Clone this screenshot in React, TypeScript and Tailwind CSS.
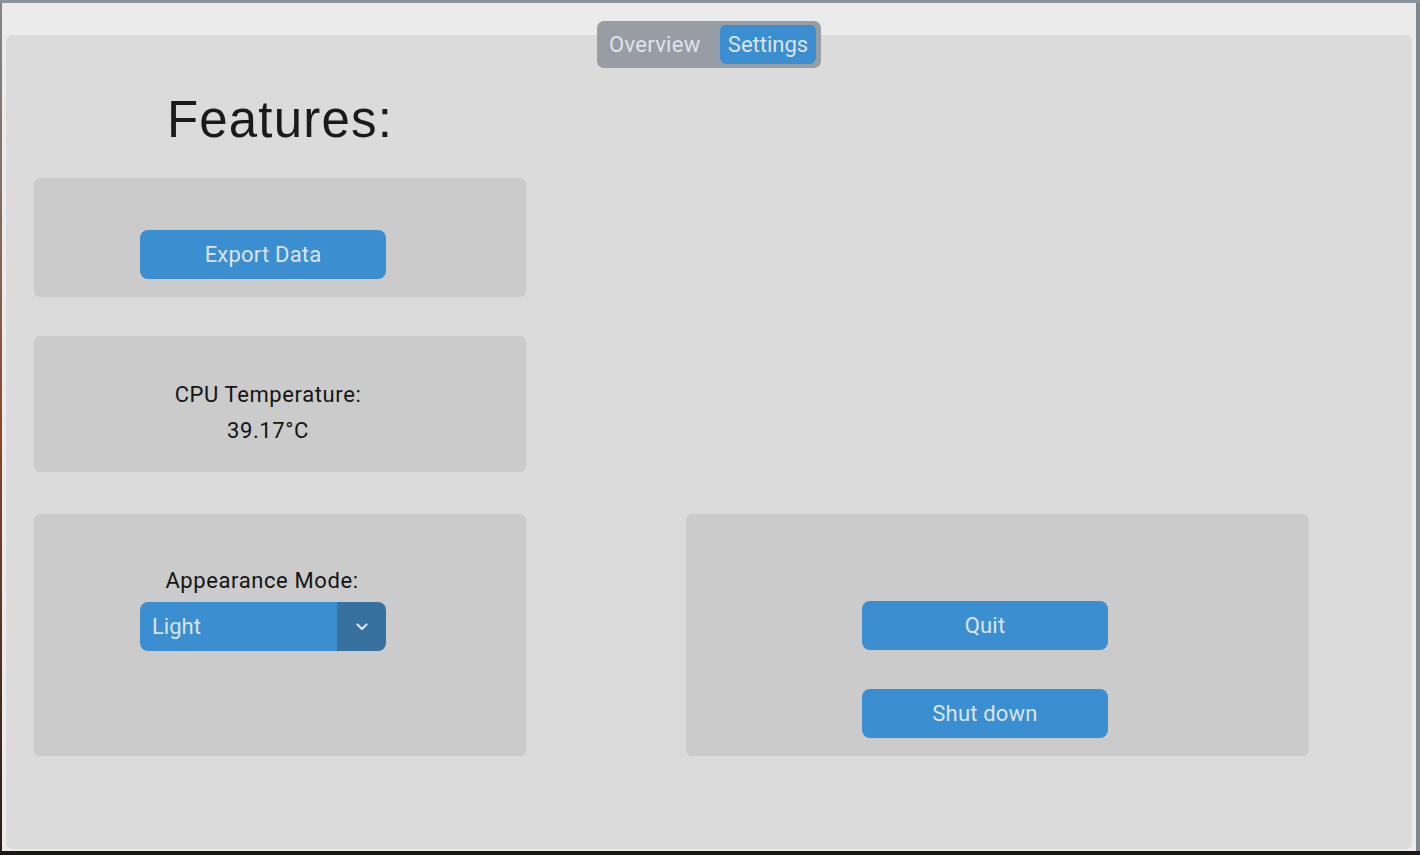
import { useState } from "react";

const blue = "bg-[#3b8ed0]";

function ActionButton({ label }: { label: string }) {
  return (
    <button
      type="button"
      className={`flex h-[49px] w-[246px] items-center justify-center rounded-[8px] ${blue} font-['Roboto',sans-serif] text-[22px] tracking-[0.2px] text-[#dce4ee]`}
    >
      {label}
    </button>
  );
}

export default function App() {
  const [tab, setTab] = useState<"Overview" | "Settings">("Settings");
  const [mode] = useState("Light");
  const cpuTemp = 39.17;

  return (
    <div className="flex h-[855px] w-[1420px] flex-col overflow-hidden bg-[#1c1717]">
      <div className="h-[3px] w-full bg-[#8a949a]" />
      <div className="flex h-[848px]">
        <div className="w-[2px] bg-gradient-to-b from-[#7d868c] via-[#8a4a26] to-[#2a1c18]" />
        <div className="flex w-[1414px] flex-col items-center bg-[#ebebeb] pt-[18px]">
          {/* tab switcher */}
          <div className="relative z-10 flex h-[47px] w-[224px] items-center rounded-[7px] bg-[#979da2] pl-[4px] font-['Roboto',sans-serif] text-[22px] text-[#dce4ee]">
            <button
              type="button"
              onClick={() => setTab("Overview")}
              className={`h-[39px] w-[119px] rounded-[6px] pl-[8px] text-left leading-[39px] tracking-[0.3px] ${
                tab === "Overview" ? blue : ""
              }`}
            >
              Overview
            </button>
            <button
              type="button"
              onClick={() => setTab("Settings")}
              className={`h-[39px] w-[96px] rounded-[6px] text-center leading-[39px] ${
                tab === "Settings" ? blue : ""
              }`}
            >
              Settings
            </button>
          </div>

          {/* tab body */}
          <div className="-mt-[33px] h-[814px] w-[1406px] rounded-[6px] bg-[#dbdbdb] pl-[28px] pt-[59px]">
            <div className="flex h-[51px] w-[492px] items-start justify-center font-['Liberation_Sans',Arial,sans-serif] text-[51px] leading-none tracking-[1.2px] text-[#1a1a1a]">
              Features:
            </div>

            <div className="mt-[33px] h-[119px] w-[492px] rounded-[6px] bg-[#cbcbcb] pl-[106px] pt-[52px]">
              <ActionButton label="Export Data" />
            </div>

            <div className="mt-[39px] h-[136px] w-[492px] rounded-[6px] bg-[#cbcbcb] pt-[41px]">
              <div className="w-[468px] text-center font-['Roboto',sans-serif] text-[22px] leading-[36px] tracking-[0.6px] text-[#141414]">
                <div>CPU Temperature:</div>
                <div>{cpuTemp.toFixed(2)}°C</div>
              </div>
            </div>

            <div className="mt-[42px] flex gap-[160px]">
              <div className="h-[242px] w-[492px] rounded-[6px] bg-[#cbcbcb] pt-[53px]">
                <div className="w-[456px] text-center font-['Roboto',sans-serif] text-[22px] leading-[28px] tracking-[0.6px] text-[#141414]">
                  Appearance Mode:
                </div>
                <div className="ml-[106px] mt-[7px] flex h-[49px] w-[246px] overflow-hidden rounded-[8px] font-['Roboto',sans-serif] text-[22px] text-[#dce4ee]">
                  <div className={`flex flex-1 items-center pl-[12px] ${blue}`}>{mode}</div>
                  <div className="flex w-[49px] items-center justify-center bg-[#36719f]">
                    <svg width="12" height="8" viewBox="0 0 12 8" fill="none">
                      <polyline
                        points="1.5,1.5 6,6 10.5,1.5"
                        stroke="#dce4ee"
                        strokeWidth="2.2"
                        strokeLinecap="round"
                        strokeLinejoin="round"
                      />
                    </svg>
                  </div>
                </div>
              </div>

              <div className="flex h-[242px] w-[623px] flex-col gap-[39px] rounded-[6px] bg-[#cbcbcb] pl-[176px] pt-[87px]">
                <ActionButton label="Quit" />
                <ActionButton label="Shut down" />
              </div>
            </div>
          </div>
        </div>
        <div className="w-[4px] bg-[#7f888e]" />
      </div>
      <div className="h-[4px] w-full bg-[#1c1717]" />
    </div>
  );
}
